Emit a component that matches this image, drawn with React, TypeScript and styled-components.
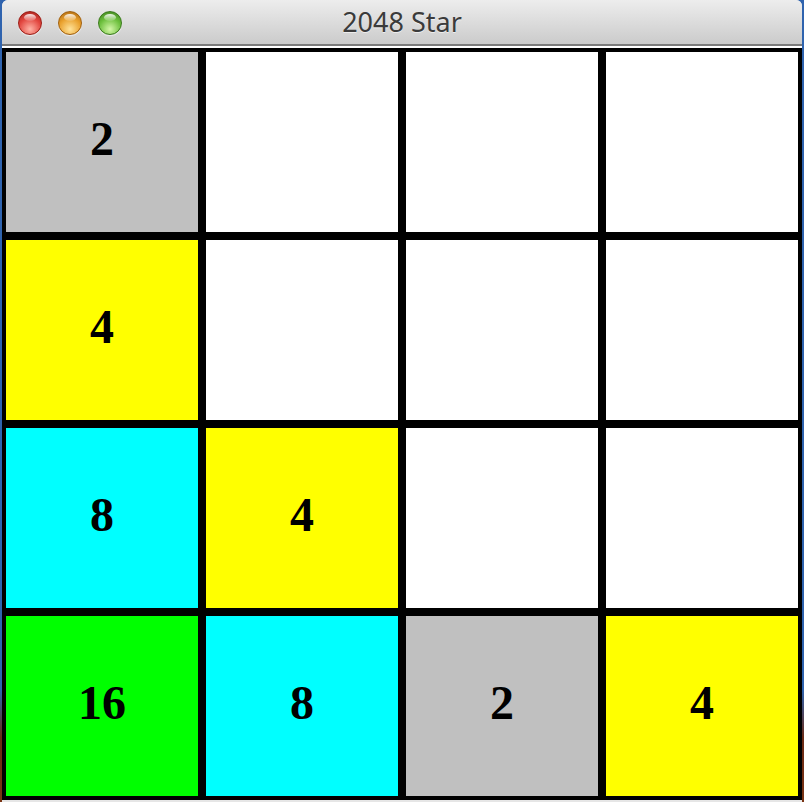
import React from "react";
import styled, { createGlobalStyle } from "styled-components";

const GlobalStyle = createGlobalStyle`
  html, body {
    margin: 0;
    padding: 0;
  }
  body {
    width: 804px;
    height: 802px;
    overflow: hidden;
    background: linear-gradient(to bottom, #2f63ae 0%, #2f63ae 86%, #6b2a14 92%, #7a3414 100%);
  }
`;

const Desktop = styled.div`
  padding: 0 2px;
  height: 802px;
  box-sizing: border-box;
`;

const Window = styled.div`
  border-radius: 6px 6px 0 0;
  overflow: hidden;
  background: #e6e6e6;
  padding-bottom: 2px;
`;

const TitleBar = styled.div`
  height: 44px;
  display: grid;
  grid-template-columns: 1fr auto 1fr;
  align-items: center;
  background: linear-gradient(to bottom, #ededed 0%, #dcdcdc 50%, #cbcbcb 100%);
  border-bottom: 2px solid #7b7b7b;
`;

const Lights = styled.div`
  display: flex;
  gap: 16px;
  padding-left: 16px;
  padding-top: 2px;
`;

const Light = styled.span<{ $base: string; $dark: string; $glow: string }>`
  position: relative;
  width: 24px;
  height: 24px;
  border-radius: 50%;
  box-sizing: border-box;
  border: 1px solid ${(p) => p.$dark};
  background: radial-gradient(
    circle at 50% 78%,
    ${(p) => p.$glow} 0%,
    ${(p) => p.$base} 55%,
    ${(p) => p.$dark} 100%
  );
  box-shadow: 0 1px 1px rgba(255, 255, 255, 0.6);
  &::after {
    content: "";
    position: absolute;
    left: 5px;
    top: 2px;
    width: 12px;
    height: 7px;
    border-radius: 50%;
    background: linear-gradient(to bottom, rgba(255, 255, 255, 0.9), rgba(255, 255, 255, 0.1));
  }
`;

const Title = styled.div`
  font-family: "Noto Sans", "DejaVu Sans", sans-serif;
  font-size: 27px;
  color: #3b3b3b;
  line-height: 1;
  padding-bottom: 2px;
  text-shadow: 0 1px 0 rgba(255, 255, 255, 0.6);
`;

const Content = styled.div`
  padding-top: 2px;
  background: #ffffff;
`;

const Board = styled.div`
  display: grid;
  grid-template-columns: repeat(4, 192px);
  grid-auto-rows: 180px;
  gap: 8px;
  padding: 4px;
  background: #000000;
`;

const Cell = styled.div<{ $bg: string }>`
  display: flex;
  align-items: center;
  justify-content: center;
  padding-bottom: 8px;
  box-sizing: border-box;
  background: ${(p) => p.$bg};
  font-family: "Liberation Serif", "Times New Roman", serif;
  font-weight: bold;
  font-size: 48px;
  color: #000000;
`;

const colors: Record<number, string> = {
  0: "#ffffff",
  2: "#c0c0c0",
  4: "#ffff00",
  8: "#00ffff",
  16: "#00ff00",
};

const grid: number[][] = [
  [2, 0, 0, 0],
  [4, 0, 0, 0],
  [8, 4, 0, 0],
  [16, 8, 2, 4],
];

export default function App() {
  return (
    <>
      <GlobalStyle />
      <Desktop>
        <Window>
          <TitleBar>
            <Lights>
              <Light $base="#e2463f" $dark="#9c1d16" $glow="#ffb3a6" />
              <Light $base="#e9a02c" $dark="#a2600e" $glow="#ffe39a" />
              <Light $base="#6cbf3c" $dark="#3a7a1c" $glow="#d4f7a8" />
            </Lights>
            <Title>2048 Star</Title>
            <div />
          </TitleBar>
          <Content>
            <Board>
              {grid.flat().map((v, i) => (
                <Cell key={i} $bg={colors[v]}>
                  {v !== 0 ? v : ""}
                </Cell>
              ))}
            </Board>
          </Content>
        </Window>
      </Desktop>
    </>
  );
}
